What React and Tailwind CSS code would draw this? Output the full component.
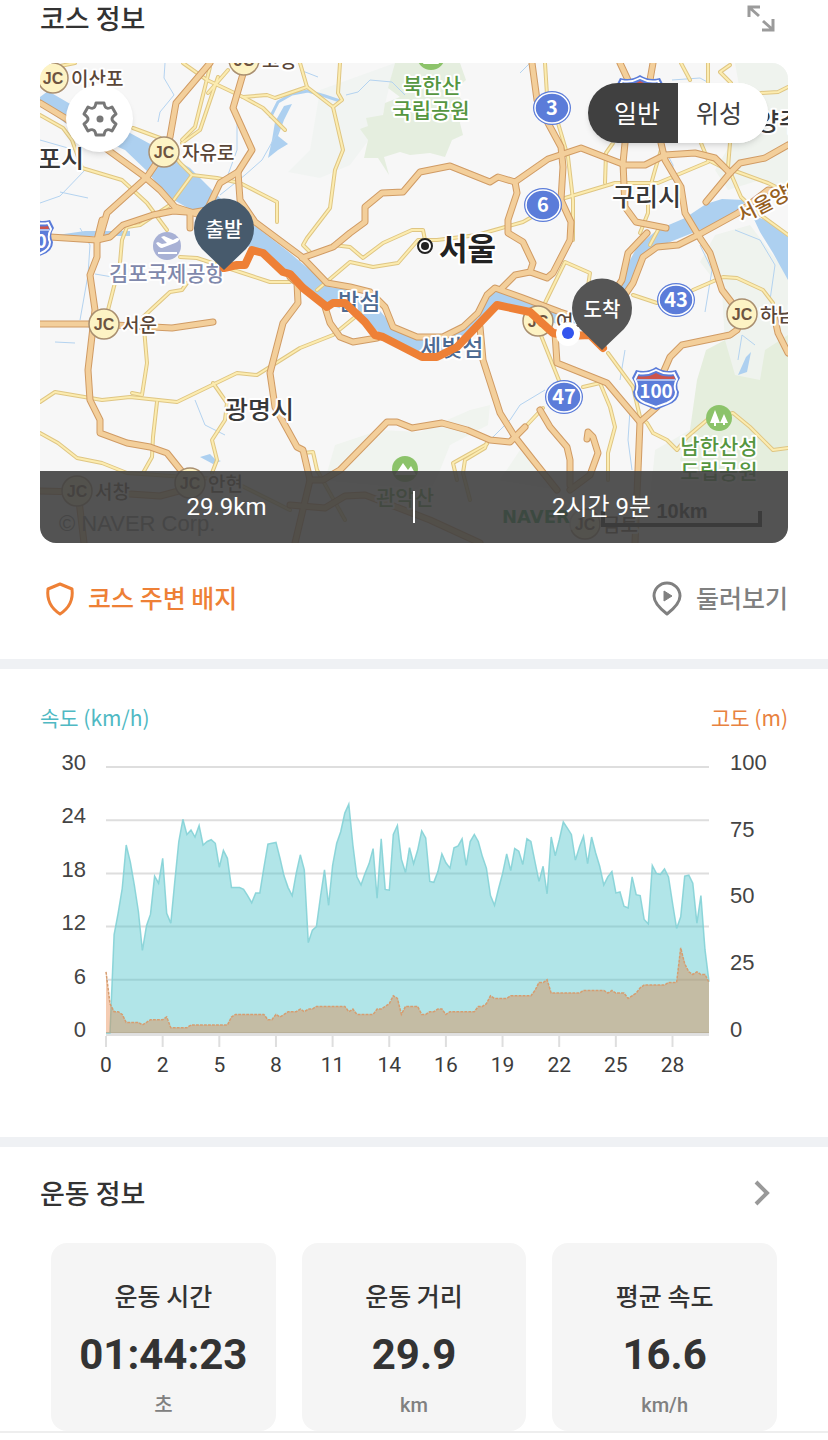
import { useState } from "react";

const KR = "font-['Noto_Sans_CJK_KR','Noto_Sans_CJK_SC',sans-serif]";
const NUM = "font-[Roboto,'Noto_Sans_CJK_KR',sans-serif]";

const HIGHWAYS = [
  "210,63 176,103 170,137 164,152 147,177 107,213 100,237",
  "245,67 233,108 252,150 238,172 240,200 255,222 302,257 327,283 350,287 370,292 385,307 393,327 417,337 443,337 463,327 478,313 487,295 495,288 523,298 560,312 590,322",
  "238,172 220,183 207,210 190,213 190,228",
  "40,103 65,118 108,150 145,177 160,190 175,207 200,215",
  "40,237 50,237 97,240 110,237 123,225 153,215 173,211 200,213",
  "102,220 97,240 97,257 90,275 95,310 88,370 90,400 100,420 100,433 127,443 150,447 167,453 183,473 195,490",
  "40,324 95,324 172,328 213,322",
  "302,258 333,247 350,233 365,222 365,207 382,193 403,192 420,172 450,166 490,182 498,177 515,182 548,159 581,148 625,165 645,165 665,155 695,153 715,158 730,173",
  "788,145 765,158 740,163 730,173 706,202",
  "515,182 517,193 508,220 508,233 523,242 533,263 530,272 515,275 502,288",
  "530,272 547,278 553,273 570,240 571,222 561,200 563,167 561,147 548,123 537,100 532,63",
  "620,63 628,80 640,100",
  "653,63 650,80 642,100",
  "625,143 623,163 625,207 636,222 666,228",
  "661,143 665,160 681,187 685,213 700,238 710,253 722,290 732,303 742,314",
  "742,320 737,330 730,335 682,345 670,357 660,380 657,407 640,422 638,470 635,543",
  "788,193 768,190 738,213 698,235 678,245 657,247 643,257 633,283 620,302",
  "647,233 628,253 622,280 607,303",
  "555,333 557,363 607,383 623,402 640,422",
  "480,327 483,360 500,413 515,437 533,460 557,490",
  "310,480 323,480 340,470 387,422 397,422 412,428 442,423 467,430 490,440 510,442 525,427",
  "290,277 297,283 298,303 283,323 270,373 275,407 297,447 303,450 310,480 295,543",
  "325,307 330,323 340,337 353,342 377,338",
  "540,410 550,427 567,447 570,460 570,485",
  "587,439 588,432 593,437 598,453 590,475 570,490",
  "773,310 778,333 788,353",
  "40,491 78,492 84,543",
  "130,494 160,496 190,488",
  "290,505 325,508 345,496 365,495 430,520 480,543",
];

const ROADS = [
  "40,115 63,128 72,140 82,168 122,180 147,203 167,230",
  "133,128 160,138 180,163 192,175 217,178 240,183 277,202 277,222",
  "210,67 195,127 182,140",
  "218,77 200,130 182,143",
  "228,70 208,93",
  "183,63 207,80 243,97 263,108 285,130",
  "55,67 75,63",
  "243,97 267,95 275,98 307,87 300,63",
  "307,87 333,107 342,100 338,93 340,63",
  "333,107 343,150 335,170 330,208 307,238 303,245 310,252",
  "192,175 170,205 140,225 127,227 122,240 120,263 108,310",
  "317,290 350,262 373,267 398,263 418,240 437,240 477,235 523,222 565,198 615,183 658,183 708,162",
  "333,245 350,247 363,258 383,243 412,230 423,230 425,240",
  "40,402 55,392 102,400 130,397 177,402 237,373 257,375 265,370 300,348 333,335 360,313",
  "187,283 182,290 170,292 143,317 147,363 142,395 132,393",
  "157,402 153,437 152,457 143,473",
  "40,433 58,443 77,458 102,463 127,473 230,480 290,510",
  "213,383 227,403 225,420 212,440 217,460 212,473",
  "180,257 197,258 270,282 290,282",
  "605,183 606,153 613,143",
  "640,233 648,213 648,195 655,170 661,150",
  "681,63 690,80",
  "708,63 708,82",
  "730,65 720,72 731,83",
  "761,93 778,92 788,87",
  "701,143 708,160 728,170",
  "730,143 728,167 741,197 758,213 788,235",
  "735,171 768,183 788,193",
  "558,123 568,157 573,200 573,240",
  "545,63 547,95",
  "543,307 565,262 590,273 588,286",
  "658,230 650,245",
  "633,295 657,303",
  "693,290 723,277 737,278 763,290 773,303",
  "608,353 633,387 640,417 647,423 653,433 667,440 677,450 687,437 707,420 733,413 750,427 773,450 788,448",
  "583,387 600,383 610,407 615,427 608,453 608,480",
  "540,333 560,383",
  "543,408 527,425",
  "487,442 485,448 465,460 463,473 470,500",
  "487,444 453,463 457,480",
  "303,453 313,452 317,470 345,520",
];

const STREAMS = [
  "165,63 164,78 174,95 160,112 158,122",
  "40,140 75,150", "40,203 60,196 85,170", "60,192 88,198",
  "237,118 237,150 225,183", "280,128 262,160 245,175 220,195",
  "346,95 358,92 370,80 392,82 405,95", "300,70 318,77",
  "95,274 130,280", "80,320 88,275 90,245 80,228", "55,342 75,343",
  "490,440 510,420 520,405 545,390", "625,350 620,380",
  "672,80 700,78 722,90", "735,230 760,240 775,265 770,300",
  "700,245 712,270 705,312", "665,150 673,165 672,180",
  "738,360 742,335 755,345", "630,410 628,440 632,470",
  "195,400 205,425 225,435", "530,63 520,73",
];

const ROUTE =
  "224,268 237,265 245,265 252,250 263,253 283,272 290,274 303,288 327,307 333,303 345,303 365,322 375,335 383,337 422,357 437,357 457,347 497,305 530,312 553,333 568,336 590,335 603,348";

const JUNCTIONS = [
  { x: 53, y: 78, name: "이산포" },
  { x: 244, y: 60, name: "고양" },
  { x: 164, y: 152, name: "자유로" },
  { x: 104, y: 324, name: "서운" },
  { x: 77, y: 491, name: "서창" },
  { x: 190, y: 483, name: "안현" },
  { x: 538, y: 321, name: "여의" },
  { x: 742, y: 314, name: "하남" },
  { x: 585, y: 524, name: "금토" },
];

const CITIES = [
  { x: 15, y: 168, name: "김포시" },
  { x: 225, y: 419, name: "광명시" },
  { x: 612, y: 206, name: "구리시" },
  { x: 733, y: 131, name: "남양주" },
];

const SHIELDS = [
  { x: 552, y: 108, no: "3" },
  { x: 543, y: 205, no: "6" },
  { x: 676, y: 300, no: "43" },
  { x: 564, y: 397, no: "47" },
];

// km/h, one sample every 200 m
const SPEED = [
  0, 0, 11.1, 13.5, 16.3, 21.2, 19.3, 16.7, 13.7, 9.3, 12.1, 13.4, 17.7, 16.9, 19.7, 13.5, 12.4, 17.1, 21.6, 24.1,
  22.4, 22.9, 22.1, 23.4, 21.2, 21.6, 21.8, 21.4, 18.7, 20.6, 19.7, 16.4, 16.4, 16.4, 16.2, 15.5, 14.7, 15.8, 15.8, 18.6,
  21.3, 21.4, 21.5, 19.7, 17.7, 16.4, 15.5, 18, 20.1, 18.4, 10.2, 11.6, 12, 15.4, 18.4, 14.4, 18.9, 21.4, 22.7, 24.8,
  25.8, 21.2, 17.6, 16.7, 18, 19.1, 20.8, 15.2, 21.9, 16.2, 16.1, 22.4, 23.4, 19.6, 18.1, 20.9, 19.1, 20.6, 22.8, 22,
  17.1, 17, 18.2, 20.2, 19.2, 18.6, 20.9, 21.1, 21.9, 18.9, 21.6, 22.4, 21.6, 19.9, 18.6, 15.5, 14.4, 16.3, 18, 20.2,
  18.3, 20.8, 20.5, 19, 21.9, 21.6, 19.3, 17.1, 18.8, 15.7, 22.1, 20, 21.8, 23.8, 23.1, 22.4, 19.5, 21, 22.2, 19.1,
  22.1, 20.3, 18.8, 16.7, 17.6, 18.2, 15.8, 15.9, 14.3, 14.1, 17.6, 15.6, 15.5, 12.8, 12.3, 18.9, 18, 17.9, 18.5, 17.6,
  14.6, 11.8, 13.1, 17.7, 17.8, 16.9, 12.4, 15.5, 9.4, 5.8,
];

// metres, [value, number of samples]
const ELEVATION = [
  [23, 1], [11, 1], [8, 2], [7, 1], [4, 4], [3, 1], [4, 1], [5, 4], [6, 1], [2, 5], [3, 10], [6, 1], [7, 8], [5, 2],
  [7, 1], [6, 1], [7, 1], [8, 3], [9, 1], [8, 1], [9, 2], [10, 8], [8, 1], [9, 1], [7, 5], [9, 2], [10, 1], [11, 1],
  [14, 1], [13, 1], [7, 1], [10, 4], [7, 2], [8, 2], [9, 2], [7, 1], [8, 7], [10, 2], [11, 1], [14, 1], [13, 4],
  [14, 6], [16, 1], [19, 2], [20, 1], [15, 8], [16, 6], [15, 1], [16, 1], [15, 3], [13, 1], [14, 1], [15, 1], [17, 1],
  [18, 6], [19, 3], [32, 1], [26, 1], [23, 1], [22, 1], [23, 1], [22, 2], [19, 1],
].flatMap(([value, count]) => Array(count).fill(value));

const STATS = [
  { label: "운동 시간", value: "01:44:23", unit: "초" },
  { label: "운동 거리", value: "29.9", unit: "km" },
  { label: "평균 속도", value: "16.6", unit: "km/h" },
];

function Lines({ list, color, width }) {
  return list.map((points) => (
    <polyline key={points} points={points} stroke={color} strokeWidth={width} />
  ));
}

function MapLabel({ x, y, size, color, bold, children, ...rest }) {
  return (
    <text
      x={x}
      y={y}
      fontSize={size}
      fill={color}
      fontWeight={bold ? 700 : 500}
      stroke="#fff"
      strokeWidth="4"
      strokeLinejoin="round"
      paintOrder="stroke"
      {...rest}
    >
      {children}
    </text>
  );
}

function Pin({ x, y, color, label }) {
  return (
    <g transform={`translate(${x} ${y})`}>
      <path d="M0 41 L-22 20 A30 30 0 1 1 22 20 Z" fill={color} />
      <text y="8" fontSize="20" fontWeight="500" fill="#fff" textAnchor="middle">{label}</text>
    </g>
  );
}

function CourseMap() {
  return (
    <svg viewBox="40 63 748 480" className={`block h-auto w-full ${KR}`} role="img" aria-label="코스 지도">
      <rect x="40" y="63" width="748" height="480" fill="#f7f7f7" />

      {/* Parks */}
      <path d="M320 90 L395 63 L380 125 L350 165 L320 178 L288 172 L310 150Z" fill="#f1f4f2" />
      <path d="M395 63 L388 88 L400 97 L385 103 L383 115 L366 118 L368 126 L360 129 L368 140 L364 158 L378 158 L389 175 L384 157 L400 152 L410 155 L430 153 L445 157 L452 140 L463 135 L460 123 L465 105 L455 90 L466 80 L460 63Z" fill="#e5eedf" />
      <path d="M325 480 L335 445 L380 430 L420 432 L470 410 L490 405 L488 425 L450 445 L440 470 L430 490Z" fill="#f0f4ef" />
      <path d="M500 480 L520 450 L540 470 L560 490Z" fill="#f0f4ef" />
      <path d="M735 63 H788 V200 L760 180 L728 190 L715 170 L745 120Z" fill="#eff3ee" />
      <path d="M715 235 L750 225 L788 275 V500 L650 500 L655 450 L690 430 L700 380 L725 345 L722 290 L700 262Z" fill="#eff3ee" />
      <path d="M690 430 L697 380 L706 350 L725 340 L735 375 L760 380 L765 350 L788 335 V480 L700 480 L680 460Z" fill="#e5eedd" />

      {/* Water */}
      <path d="M40 97 L48 91 L72 105 L130 133 L152 145 L190 168 L220 198 L250 222 L290 253 L330 287 L350 290 L375 305 L392 325 L425 340 L448 340 L478 318 L490 296 L500 289 L540 306 L600 324 L622 275 L637 247 L657 230 L685 218 L706 204 L722 199 L745 200 L740 214 L700 230 L660 246 L640 258 L630 290 L612 335 L560 325 L530 315 L498 305 L455 350 L422 358 L385 338 L360 315 L330 305 L300 283 L270 256 L245 245 L195 212 L165 195 L148 172 L125 150 L68 125 L40 105Z" fill="#add0f0" />
      <path d="M752 215 L773 223 L788 237 V280 L773 253 L760 232Z" fill="#add0f0" />
      <path d="M284 106 L292 104 L284 120 L278 136 L288 144 L278 150 L268 158 L272 140 L275 122Z" fill="#add0f0" />
      <path d="M270 118 L278 102 L292 94 L308 91 L325 96 L340 101" fill="none" stroke="#add0f0" strokeWidth="3" />
      <g fill="none" strokeLinejoin="round">
        <Lines list={STREAMS} color="#b4d3f0" width={1} />
      </g>
      <path d="M200 457 l10 -3 l5 5 l6 2 l-8 3Z M738 375 l8 -18 l5 -5 l-4 20Z M50 236 L85 231 L130 231 L130 236Z" fill="#add0f0" />

      {/* Road network */}
      <g fill="none" strokeLinejoin="round" strokeLinecap="round">
        <Lines list={ROADS} color="#dfc684" width={4} />
        <Lines list={ROADS} color="#fcecb0" width={2} />
        <Lines list={HIGHWAYS} color="#d09b64" width={7} />
        <Lines list={HIGHWAYS} color="#f3cf9b" width={5} />
      </g>

      {JUNCTIONS.map(({ x, y, name }) => (
        <g key={name}>
          <circle cx={x} cy={y} r="15" fill="#fdf3c4" stroke="#a98f70" strokeWidth="1.5" />
          <text x={x} y={y + 6} fontSize="16" fontWeight="700" fill="#6d5440" textAnchor="middle" fontFamily="Liberation Sans, sans-serif">JC</text>
          <MapLabel x={x + 18} y={y + 8} size={19} color="#5a4638">{name}</MapLabel>
        </g>
      ))}

      {CITIES.map(({ x, y, name }) => (
        <MapLabel key={name} x={x} y={y} size={25} color="#383838">{name}</MapLabel>
      ))}

      <circle cx="425" cy="246" r="7" fill="#fff" stroke="#222" strokeWidth="2" />
      <circle cx="425" cy="246" r="4" fill="#222" />
      <MapLabel x={439} y={260} size={31} color="#222" bold>서울</MapLabel>

      <MapLabel x={338} y={310} size={23} color="#4d6b93">밤섬</MapLabel>
      <MapLabel x={420} y={356} size={23} color="#4d6b93">세빛섬</MapLabel>
      <MapLabel x={742} y={223} size={20} color="#96601f" transform="rotate(-27 742 223)">서울양양</MapLabel>

      {/* Airport */}
      <circle cx="167" cy="246" r="14" fill="#a8b1d5" />
      <path d="M158 253 H177" stroke="#fff" strokeWidth="2" />
      <path d="M156 243 L158 242 L162 244 L167 243 L161 237 L164 236 L173 240 L177 238 Q180 238 179 240 Q178 242 175 243 L162 248 Q159 248 156 243Z" fill="#fff" />
      <MapLabel x={109} y={281} size={21} color="#7f88ab">김포국제공항</MapLabel>

      {/* Mountains */}
      <circle cx="431" cy="56" r="14" fill="#8cc36a" />
      <path d="M423 64 l5 -10 l5 10Z M431 64 l4 -8 l4 8Z" fill="#fff" />
      <circle cx="405" cy="469" r="13" fill="#8cc36a" />
      <path d="M395 475 L403 463 L408 470 L411 466 L416 475Z" fill="#fff" />
      <circle cx="719" cy="418" r="13" fill="#8cc36a" />
      <path d="M710 423 L715 410 L720 423Z M714 423 h2 v3 h-2Z M720 423 L724 414 L728 423Z M723 423 h2 v2 h-2Z" fill="#fff" />
      <g textAnchor="middle">
        <MapLabel x={432} y={93} size={21} color="#559640">북한산</MapLabel>
        <MapLabel x={431} y={118} size={21} color="#559640">국립공원</MapLabel>
        <MapLabel x={719} y={454} size={21} color="#559640">남한산성</MapLabel>
        <MapLabel x={719} y={479} size={21} color="#559640">도립공원</MapLabel>
        <MapLabel x={405} y={505} size={21} color="#559640">관악산</MapLabel>
      </g>

      {/* Route numbers */}
      {SHIELDS.map(({ x, y, no }) => (
        <g key={no}>
          <ellipse cx={x} cy={y} rx="19" ry="17" fill="#5b7cd9" />
          <ellipse cx={x} cy={y} rx="17" ry="15" fill="none" stroke="#fff" strokeWidth="1.5" />
          <text x={x} y={y + 7} fontSize="20" fontWeight="700" fill="#fff" textAnchor="middle">{no}</text>
        </g>
      ))}
      {[
        { x: 640, y: 96 },
        { x: 656, y: 388, no: "100" },
        { x: 30, y: 238, no: "100" },
      ].map(({ x, y, no }) => (
        <g key={x} transform={`translate(${x} ${y})`}>
          <path d="M-20 -18 Q-9 -15 0 -21 Q9 -15 20 -18 L24 -10 Q19 -3 23 4 Q23 13 12 17 L0 22 L-12 17 Q-23 13 -23 4 Q-19 -3 -24 -10Z" fill="#5b7cd9" />
          <path d="M-18 -15 Q-9 -13 0 -18 Q9 -13 18 -15 L21 -9 Q17 -2 20 4 Q20 11 11 15 L0 19 L-11 15 Q-20 11 -20 4 Q-17 -2 -21 -9Z" fill="#5b7cd9" stroke="#fff" strokeWidth="2" />
          <path d="M-18 -12 Q-8 -10 0 -15 Q8 -10 18 -12 L19 -9 H-19Z" fill="#cc544c" />
          <path d="M-19 -8 H19" stroke="#fff" strokeWidth="1" />
          {no && <text y="10" fontSize="19" fontWeight="700" fill="#fff" textAnchor="middle">{no}</text>}
        </g>
      ))}

      {/* Ridden course */}
      <polyline points={ROUTE} fill="none" stroke="#ee8036" strokeWidth="8" strokeLinejoin="round" strokeLinecap="round" />
      <circle cx="568" cy="334" r="12" fill="#fff" />
      <circle cx="568" cy="333" r="6" fill="#3355ee" />
      <Pin x={224} y={229} color="#475a6c" label="출발" />
      <Pin x={602} y={309} color="#555" label="도착" />

      {/* Attribution and scale */}
      <text x="59" y="531" fontSize="22" fill="#777" fontFamily="Liberation Sans, sans-serif">© NAVER Corp.</text>
      <rect x="492" y="500" width="88" height="32" rx="16" fill="#fff" fillOpacity=".6" />
      <text x="502" y="523" fontSize="18" fontWeight="900" fill="#1c9c48" fontFamily="DejaVu Sans, sans-serif">NAVER</text>
      <path d="M603 511 V525 H760 V511" fill="none" stroke="#111" strokeWidth="4" />
      <text x="682" y="518" fontSize="20" fontWeight="700" fill="#222" textAnchor="middle" fontFamily="Liberation Sans, sans-serif">10km</text>
    </svg>
  );
}

function GearIcon() {
  return (
    <svg viewBox="-20 -20 40 40" className="size-10" aria-hidden="true">
      <path
        d="M-4 -16 H4 Q5 -11 7 -11 Q8 -10 12 -12 L16 -5 Q12 -2 12 0 Q12 2 16 5 L12 12 Q8 10 7 11 Q5 11 4 16 H-4 Q-5 11 -7 11 Q-8 10 -12 12 L-16 5 Q-12 2 -12 0 Q-12 -2 -16 -5 L-12 -12 Q-8 -10 -7 -11 Q-5 -11 -4 -16Z"
        fill="none"
        stroke="#777"
        strokeWidth="3"
        strokeLinejoin="round"
      />
      <circle r="3.5" fill="#777" />
    </svg>
  );
}

const X0 = 106;
const X1 = 709;
const BASE = 1033;
const TOP = 767;

function toPoints(data, max) {
  const step = (X1 - X0) / (data.length - 1);
  return data.map((v, i) => `${(X0 + i * step).toFixed(1)},${(BASE - (v / max) * (BASE - TOP)).toFixed(1)}`).join(" ");
}

function RideChart() {
  const speed = toPoints(SPEED, 30);
  const elevation = toPoints(ELEVATION, 100);
  const close = ` ${X1},${BASE} ${X0},${BASE}`;

  return (
    <svg viewBox="40 745 748 340" className="mt-[14px] block h-auto w-full" role="img" aria-label="속도와 고도 그래프">
      {[30, 24, 18, 12, 6, 0].map((v, i) => {
        const y = BASE - (v / 30) * (BASE - TOP);
        return (
          <g key={v}>
            <path d={`M${X0} ${y} H${X1}`} stroke="#dedede" strokeWidth="2" />
            <text x="86" y={770 + i * 53.4} fontSize="22" fill="#444" textAnchor="end" fontFamily="Liberation Sans, sans-serif">{v}</text>
          </g>
        );
      })}
      {[100, 75, 50, 25, 0].map((v, i) => (
        <text key={v} x="730" y={770 + i * 66.7} fontSize="22" fill="#444" fontFamily="Liberation Sans, sans-serif">{v}</text>
      ))}

      <polygon points={speed + close} fill="#4ec4cb" fillOpacity=".44" />
      <polyline points={speed} fill="none" stroke="#84d2d6" strokeWidth="1.5" strokeOpacity=".9" />
      <polygon points={elevation + close} fill="#e47a34" fillOpacity=".38" />
      <polyline points={elevation} fill="none" stroke="#d69d70" strokeWidth="1.5" strokeDasharray="3 1" />

      <path d={`M${X0} 1035 H${X1}`} stroke="#e0e0e0" strokeWidth="2" />
      {[0, 2, 5, 8, 11, 14, 16, 19, 22, 25, 28].map((v, i) => {
        const x = X0 + i * 56.65;
        return (
          <g key={v}>
            <path d={`M${x} 1036 V1047`} stroke="#dedede" strokeWidth="2" />
            <text x={x} y="1072" fontSize="21" fill="#3c3c3c" textAnchor="middle" fontFamily="Roboto, sans-serif">{v}</text>
          </g>
        );
      })}
    </svg>
  );
}

export default function App() {
  const [mapType, setMapType] = useState("normal");

  return (
    <main className={`min-h-screen bg-white text-[#333] ${KR}`}>
      {/* Course */}
      <section className="px-10">
        <div className="mb-[27px] flex h-9 items-center justify-between">
          <h2 className="text-[27px] leading-9 font-medium">코스 정보</h2>
          <button type="button" aria-label="지도 크게 보기" className="mr-[13px]">
            <svg viewBox="0 0 28 28" className="size-7" fill="none" stroke="#9b9b9b" strokeWidth="3">
              <path d="M2 13 V3 H13 M3 4 L12 12" />
              <path d="M26 15 V26 H15 M25 25 L16 17" />
            </svg>
          </button>
        </div>

        <div className="relative overflow-hidden rounded-2xl">
          <CourseMap />
          <button
            type="button"
            aria-label="지도 설정"
            className="absolute top-[22px] left-[26px] flex size-[67px] items-center justify-center rounded-full bg-white shadow-md"
          >
            <GearIcon />
          </button>
          <div className="absolute top-5 right-5 flex h-[60px] w-[180px] overflow-hidden rounded-full bg-white text-[25px] shadow-md">
            <button
              type="button"
              aria-pressed={mapType === "normal"}
              onClick={() => setMapType("normal")}
              className={`flex-1 pl-2 ${mapType === "normal" ? "bg-[#404040] text-white" : "bg-white text-[#404040]"}`}
            >
              일반
            </button>
            <button
              type="button"
              aria-pressed={mapType === "satellite"}
              onClick={() => setMapType("satellite")}
              className={`flex-1 pr-2 ${mapType === "satellite" ? "bg-[#404040] text-white" : "bg-white text-[#404040]"}`}
            >
              위성
            </button>
          </div>
          <div className={`absolute inset-x-0 bottom-0 flex h-[72px] items-center bg-[#404040]/90 text-2xl text-white ${NUM}`}>
            <p className="flex-1 text-center">29.9km</p>
            <span className="h-8 w-[2px] bg-white" />
            <p className="flex-1 text-center">2시간 9분</p>
          </div>
        </div>

        <div className="mb-[6px] flex h-[110px] items-center justify-between text-[25px] font-medium">
          <button type="button" className="flex items-center gap-3 text-[#ee8036]">
            <svg viewBox="0 0 32 36" className="ml-1 h-9 w-8" fill="none" stroke="currentColor" strokeWidth="3" strokeLinejoin="round">
              <path d="M16 4 L28 9 Q30 25 16 34 Q2 25 4 9Z" />
            </svg>
            코스 주변 배지
          </button>
          <button type="button" className="flex items-center gap-3 text-[#808080]">
            <svg viewBox="0 0 32 36" className="h-9 w-8" fill="none" stroke="currentColor" strokeWidth="3" strokeLinejoin="round">
              <path d="M15 34 Q2 24 2 16 A13 13 0 0 1 28 16 Q28 24 15 34Z" />
              <path d="M12 11 L20 16 L12 21Z" fill="currentColor" strokeWidth="1" />
            </svg>
            둘러보기
          </button>
        </div>
      </section>

      <div className="h-[10px] bg-[#eff1f4]" />

      {/* Speed and elevation */}
      <section className="px-10 pt-[34px] pb-[52px]">
        <div className="flex justify-between text-[21px] leading-7">
          <span className="text-[#4fb9c3]">속도 (km/h)</span>
          <span className="text-[#e8823f]">고도 (m)</span>
        </div>
        <RideChart />
      </section>

      <div className="h-[10px] bg-[#eff1f4]" />

      {/* Workout */}
      <section className="border-b-2 border-[#eee]">
        <div className="mb-1 flex h-[92px] items-center justify-between px-10">
          <h2 className="text-[27px] leading-9 font-medium">운동 정보</h2>
          <button type="button" aria-label="운동 정보 더보기" className="mr-4">
            <svg viewBox="0 0 20 28" className="h-7 w-5" fill="none" stroke="#999" strokeWidth="4">
              <path d="M4 3 L15 14 L4 25" />
            </svg>
          </button>
        </div>
        <div className="grid grid-cols-3 gap-[26px] px-[51px]">
          {STATS.map(({ label, value, unit }) => (
            <div key={label} className="flex flex-col items-center rounded-2xl bg-[#f5f5f5] pt-8 pb-3">
              <h3 className="text-[25px] leading-10 font-medium">{label}</h3>
              <p className="mt-3 font-[Roboto,sans-serif] text-[42px] leading-[56px] font-bold">{value}</p>
              <p className={`mt-2 text-xl leading-7 font-medium text-[#808080] ${NUM}`}>{unit}</p>
            </div>
          ))}
        </div>
      </section>
    </main>
  );
}
